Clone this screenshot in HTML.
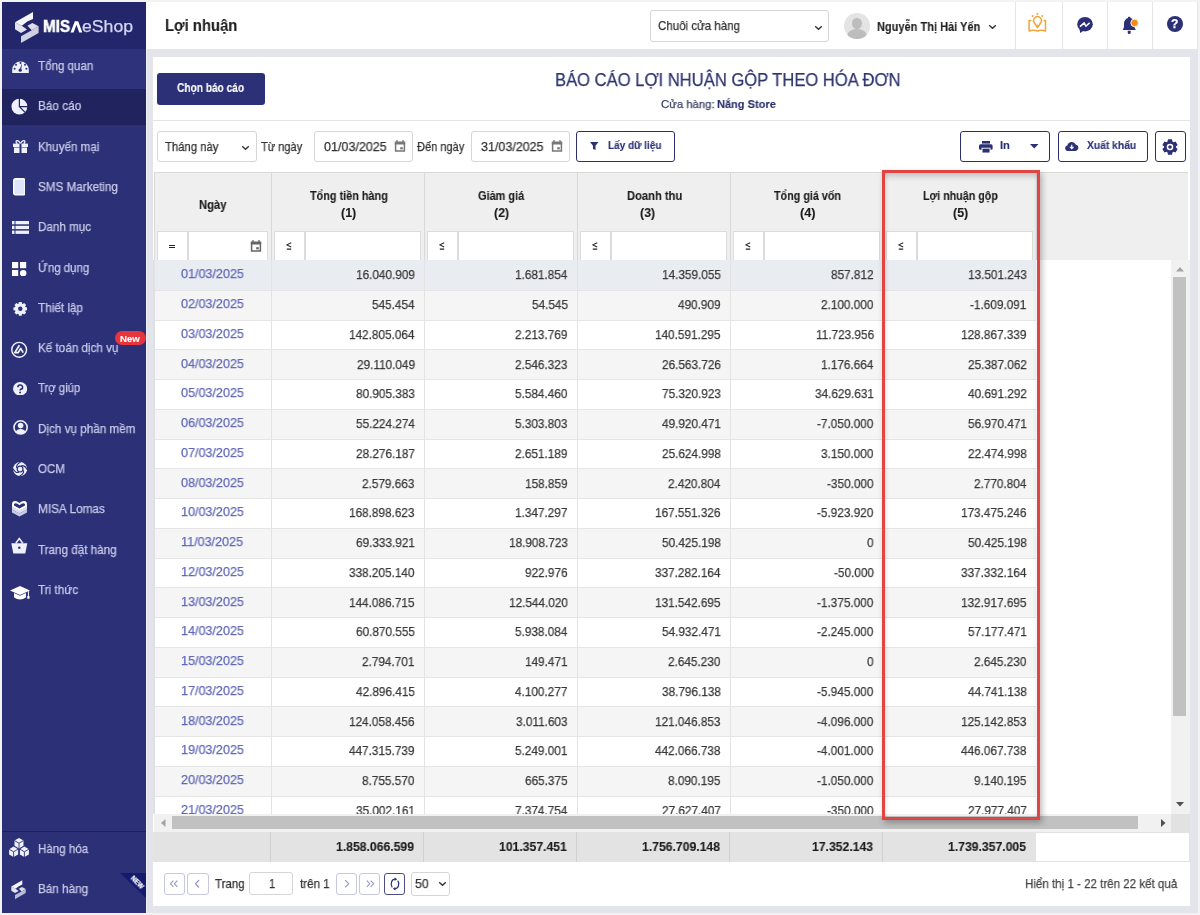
<!DOCTYPE html><html><head><meta charset="utf-8"><style>
*{margin:0;padding:0;box-sizing:border-box}
html,body{width:1200px;height:915px;overflow:hidden}
body{background:#f3f3f5;font-family:"Liberation Sans",sans-serif;position:relative;color:#333}
.a{position:absolute}
.app{left:2px;top:2px;width:1196px;height:911px;background:#e4e5ea}
.sb{left:2px;top:2px;width:144px;height:911px;background:#2c3077}
.logo{left:2px;top:2px;width:144px;height:47px;background:#23266a}
.it{left:2px;width:144px;height:40.25px}
.hdr{left:146px;top:2px;width:1051px;height:47px;background:#fff}
.panel{left:153px;top:57px;width:1037px;height:849px;background:#fff}
.txt{position:absolute;white-space:nowrap;line-height:1;transform-origin:0 0;will-change:transform;-webkit-text-stroke:0.25px currentColor}
.btn{position:absolute;border:1.6px solid #2b2e6c;border-radius:3px;background:#fff}
.inp{position:absolute;border:1px solid #d6d6d6;border-radius:3px;background:#fff}
</style></head><body>
<div class="a app"></div>
<div class="a sb"></div>
<div class="a logo"></div>
<svg class="a" style="left:10px;top:8px" width="34" height="38" viewBox="0 0 34 38">
<polygon points="5,14.3 23,3.9 23,11 17.3,13.6 11.8,17.8" fill="#f6f6fb"/>
<polygon points="5,14.3 11.8,17.8 17,21.6 11,24.9 5,21.2" fill="#e4e4ef"/>
<polygon points="17.4,17.8 22.4,14.9 28.6,18.3 21.8,22.2" fill="#dedeea"/>
<polygon points="11,28.2 21.8,22.2 28.6,18.3 28.6,24.9 11,34.9" fill="#cfd0e0"/>
</svg>
<div class="txt" style="left:43.23px;top:18.00px;font-size:16.23px;font-weight:bold;-webkit-text-stroke:0.12px currentColor;color:#fff;transform:scaleX(0.9407);-webkit-text-stroke:0.5px #fff">MIS</div>
<svg class="a" style="left:69.5px;top:20.5px" width="13" height="12" viewBox="0 0 13 12"><path d="M0.5 11.5L4.8 0.3H8.2L12.3 11.5H9.2L6.5 3.8 3.6 11.5z" fill="#fff"/></svg>
<div class="txt" style="left:82.49px;top:18.00px;font-size:16.23px;color:#d4d6f0;transform:scaleX(1.0874);">eShop</div>
<div class="a it" style="top:49.00px;background:#2e327a;"></div>
<div class="txt" style="left:38.37px;top:60.00px;font-size:12.17px;color:#c8cae9;transform:scaleX(0.9525);">Tổng quan</div>
<div class="a it" style="top:89.30px;background:#21235f;height:36px;"></div>
<div class="txt" style="left:37.65px;top:100.00px;font-size:12.17px;color:#c8cae9;transform:scaleX(0.9718);">Báo cáo</div>
<div class="txt" style="left:37.67px;top:141.00px;font-size:12.17px;color:#c8cae9;transform:scaleX(0.9559);">Khuyến mại</div>
<div class="txt" style="left:38.01px;top:181.00px;font-size:12.17px;color:#c8cae9;transform:scaleX(0.9620);">SMS Marketing</div>
<div class="txt" style="left:37.67px;top:221.00px;font-size:12.17px;color:#c8cae9;transform:scaleX(0.9580);">Danh mục</div>
<div class="txt" style="left:37.68px;top:262.00px;font-size:12.17px;color:#c8cae9;transform:scaleX(0.9450);">Ứng dụng</div>
<div class="txt" style="left:38.36px;top:302.00px;font-size:12.17px;color:#c8cae9;transform:scaleX(0.9652);">Thiết lập</div>
<div class="txt" style="left:37.66px;top:342.00px;font-size:12.17px;color:#c8cae9;transform:scaleX(0.9602);">Kế toán dịch vụ</div>
<div class="txt" style="left:38.37px;top:382.00px;font-size:12.17px;color:#c8cae9;transform:scaleX(0.9333);">Trợ giúp</div>
<div class="txt" style="left:37.66px;top:423.00px;font-size:12.17px;color:#c8cae9;transform:scaleX(0.9608);">Dịch vụ phần mềm</div>
<div class="txt" style="left:38.02px;top:463.00px;font-size:12.17px;color:#c8cae9;transform:scaleX(0.9484);">OCM</div>
<div class="txt" style="left:37.65px;top:503.00px;font-size:12.17px;color:#c8cae9;transform:scaleX(0.9709);">MISA Lomas</div>
<div class="txt" style="left:38.37px;top:544.00px;font-size:12.17px;color:#c8cae9;transform:scaleX(0.9583);">Trang đặt hàng</div>
<div class="txt" style="left:38.36px;top:584.00px;font-size:12.17px;color:#c8cae9;transform:scaleX(0.9657);">Tri thức</div>
<svg class="a" style="left:11.5px;top:59.5px" width="17" height="13" viewBox="0 0 17 13"><path d="M0.2 13V9.8A8.3 8.3 0 0 1 16.8 9.8V13z" fill="#eef0fb"/><g fill="#2c3077"><circle cx="8.5" cy="3" r="1"/><circle cx="4" cy="4.8" r="1"/><circle cx="13" cy="4.8" r="1"/><circle cx="2.6" cy="8.8" r="1"/><circle cx="14.4" cy="8.8" r="1"/><circle cx="8.2" cy="10.2" r="1.6"/><path d="M7.6 10L9.6 4.2 10 4.4 9 10.5z"/></g></svg>
<svg class="a" style="left:11px;top:97.5px" width="17.5" height="17.5" viewBox="0 0 17.5 17.5"><circle cx="8.4" cy="8.6" r="7.9" fill="#eef0fb"/><path d="M8.4 0V8.6H17.5M8.4 8.6L14.6 14.8" stroke="#21235f" stroke-width="1.2" fill="none"/></svg>
<svg class="a" style="left:12.5px;top:140px" width="15" height="13" viewBox="0 0 15 13"><path d="M4.5 3.5C2.5 3 2.8 0.3 4.6 0.6 6 0.9 7.5 3.5 7.5 3.5 7.5 3.5 9 0.9 10.4 0.6 12.2 0.3 12.5 3 10.5 3.5" stroke="#eef0fb" stroke-width="1.3" fill="none"/><rect x="0" y="3.6" width="15" height="3.4" fill="#eef0fb"/><rect x="1" y="7.5" width="13" height="5.5" fill="#eef0fb"/><rect x="6.5" y="3.6" width="2" height="9.4" fill="#2c3077"/></svg>
<svg class="a" style="left:12.7px;top:178.3px" width="12.6" height="17.6" viewBox="0 0 12.6 17.6"><rect x="0.7" y="0.7" width="11.2" height="16.2" rx="1.8" fill="#dfe6fb" stroke="#fff" stroke-width="1.4"/></svg>
<svg class="a" style="left:11.7px;top:220.9px" width="17.2" height="13" viewBox="0 0 17.2 13" fill="#eef0fb"><rect x="0" y="0" width="2.5" height="3.3"/><rect x="3.5" y="0" width="13.7" height="3.3"/><rect x="0" y="4.8" width="2.5" height="3.3"/><rect x="3.5" y="4.8" width="13.7" height="3.3"/><rect x="0" y="9.6" width="2.5" height="3.3"/><rect x="3.5" y="9.6" width="13.7" height="3.3"/></svg>
<svg class="a" style="left:12px;top:261.7px" width="14.5" height="14.5" viewBox="0 0 14.5 14.5" fill="#fff"><rect x="0" y="0" width="6.2" height="6.2"/><rect x="8" y="0" width="6.2" height="6.2"/><rect x="0" y="8" width="6.2" height="6.2"/><circle cx="11.2" cy="11.2" r="3.2"/></svg>
<svg class="a" style="left:12.7px;top:302.3px" width="14.6" height="13.6" viewBox="-7.3 -6.8 14.6 13.6"><path fill="#eef0fb" d="M5.11 -1.75 L6.86 -1.39 L6.86 1.39 L5.11 1.75 L4.85 2.38 L5.83 3.87 L3.87 5.83 L2.38 4.85 L1.75 5.11 L1.39 6.86 L-1.39 6.86 L-1.75 5.11 L-2.38 4.85 L-3.87 5.83 L-5.83 3.87 L-4.85 2.38 L-5.11 1.75 L-6.86 1.39 L-6.86 -1.39 L-5.11 -1.75 L-4.85 -2.38 L-5.83 -3.87 L-3.87 -5.83 L-2.38 -4.85 L-1.75 -5.11 L-1.39 -6.86 L1.39 -6.86 L1.75 -5.11 L2.38 -4.85 L3.87 -5.83 L5.83 -3.87 L4.85 -2.38Z"/><circle r="2.2" fill="#2c3077"/></svg>
<svg class="a" style="left:8px;top:338px" width="24" height="24" viewBox="0 0 24 24"><circle cx="11.15" cy="11.8" r="7.4" fill="none" stroke="#f4f4ff" stroke-width="1.4"/><path d="M11.4 7.2L6.8 14.6H10.2L12.7 10.4L15.2 14.6" stroke="#f4f4ff" stroke-width="1.7" fill="none" stroke-linejoin="round"/></svg>
<svg class="a" style="left:12.8px;top:381.8px" width="14.2" height="13.6" viewBox="0 0 14.2 13.6"><ellipse cx="7.1" cy="6.8" rx="7.1" ry="6.8" fill="#eef0fb"/><path d="M4.8 5.2A2.4 2.2 0 1 1 7.8 7.3Q7.1 7.6 7.1 8.4" stroke="#2c3077" stroke-width="1.6" fill="none"/><circle cx="7.1" cy="10.4" r="1" fill="#2c3077"/></svg>
<svg class="a" style="left:13px;top:420px" width="15.2" height="14.8" viewBox="0 0 15.2 14.8"><circle cx="7.6" cy="7.4" r="6.6" fill="none" stroke="#eef0fb" stroke-width="1.6"/><circle cx="7.6" cy="5.6" r="2.8" fill="#eef0fb"/><path d="M2.8 11.8Q4 9 7.6 9 11.2 9 12.4 11.8 10.6 14 7.6 14 4.6 14 2.8 11.8z" fill="#eef0fb"/></svg>
<svg class="a" style="left:12.6px;top:461.8px" width="14.2" height="14.2" viewBox="-7.1 -7.1 14.2 14.2"><circle r="7" fill="#eef0fb"/><g stroke="#2c3077" stroke-width="1.1" fill="none"><path d="M-3.4 -1.2 Q-4 -5 0.5 -6.9"/><path d="M3.4 1.2 Q4 5 -0.5 6.9"/><path d="M1.2 -3.4 Q5 -4 6.9 0.5"/><path d="M-1.2 3.4 Q-5 4 -6.9 -0.5"/></g><circle r="3.5" fill="#2c3077"/><circle r="2.3" fill="#eef0fb"/></svg>
<svg class="a" style="left:10.6px;top:500px" width="17" height="17" viewBox="0 0 17 17"><path d="M1 9.5V12.5L8.5 16.5 16 12.5V9.5L8.5 13.5z" fill="#c9cbea"/><path d="M1 6.5V9.5L8.5 13.5 16 9.5V6.5L8.5 10.5z" fill="#dcdef5"/><path d="M8.5 3Q5.5 0.3 2.5 1.3 0.8 2 1 4.5V6.8L8.5 10.8 16 6.8V4.5Q16.2 2 14.5 1.3 11.5 0.3 8.5 3z" fill="#fff"/><path d="M8.5 5.2Q6 3 3.8 3.4 2.9 3.7 3 4.8V5.6L8.5 8.6 14 5.6V4.8Q14.1 3.7 13.2 3.4 11 3 8.5 5.2z" fill="#2c3077"/></svg>
<svg class="a" style="left:11px;top:534.4px" width="16.6" height="20.3" viewBox="0 0 16.6 20.3"><path d="M4.8 9.2L8.3 4.6 11.8 9.2" stroke="#eef0fb" stroke-width="1.5" fill="none"/><path d="M0.3 9.3H16.3L14.3 19.6H2.3z" fill="#eef0fb"/><circle cx="8.3" cy="13.8" r="1.2" fill="#2c3077"/></svg>
<svg class="a" style="left:9.5px;top:585.5px" width="20.3" height="14.5" viewBox="0 0 20.3 14.5"><path d="M10 0L20 4.5 10 9 0 4.5z" fill="#fff"/><path d="M4 7V11.5Q10 15.5 16 11.5V7L10 9.8z" fill="#fff"/><path d="M18.4 5.2V10" stroke="#fff" stroke-width="1"/><rect x="17.3" y="10" width="2.2" height="2.8" fill="#fff"/></svg>
<svg class="a" style="left:8px;top:838px" width="22" height="20" viewBox="0 0 22 20"><polygon points="11.00,0.00 6.50,2.60 6.50,7.80 11.00,10.40 15.50,7.80 15.50,2.60" fill="#eef0fb"/><path d="M6.50 2.60L11 5.2L15.50 2.60M11 5.2V10.40" stroke="#2c3077" stroke-width="0.9" fill="none"/><polygon points="5.60,8.60 1.10,11.20 1.10,16.40 5.60,19.00 10.10,16.40 10.10,11.20" fill="#eef0fb"/><path d="M1.10 11.20L5.6 13.8L10.10 11.20M5.6 13.8V19.00" stroke="#2c3077" stroke-width="0.9" fill="none"/><polygon points="16.40,8.60 11.90,11.20 11.90,16.40 16.40,19.00 20.90,16.40 20.90,11.20" fill="#eef0fb"/><path d="M11.90 11.20L16.4 13.8L20.90 11.20M16.4 13.8V19.00" stroke="#2c3077" stroke-width="0.9" fill="none"/></svg>
<svg class="a" style="left:11.2px;top:879.8px" width="15" height="19.5" viewBox="4.5 3.5 24.5 32"><polygon points="5,14.3 23,3.9 23,11 17.3,13.6 11.8,17.8" fill="#f6f6fb"/><polygon points="5,14.3 11.8,17.8 17,21.6 11,24.9 5,21.2" fill="#e4e4ef"/><polygon points="17.4,17.8 22.4,14.9 28.6,18.3 21.8,22.2" fill="#dedeea"/><polygon points="11,28.2 21.8,22.2 28.6,18.3 28.6,24.9 11,34.9" fill="#b9bcd8"/></svg>
<div class="a" style="left:115px;top:331px;width:30.5px;height:14px;border-radius:7px;background:#e8343b"></div>
<div class="txt" style="left:120.12px;top:335.00px;font-size:8.70px;font-weight:bold;-webkit-text-stroke:0.12px currentColor;color:#fff;transform:scaleX(1.1095);">New</div>
<div class="a" style="left:2px;top:830.5px;width:144px;height:1.5px;background:#1c1f63"></div>
<div class="txt" style="left:37.77px;top:843.00px;font-size:12.17px;color:#c8cae9;transform:scaleX(0.9506);">Hàng hóa</div>
<div class="txt" style="left:37.76px;top:883.00px;font-size:12.17px;color:#c8cae9;transform:scaleX(0.9643);">Bán hàng</div>
<svg class="a" style="left:120px;top:873px" width="26" height="25"><polygon points="0,0 26,0 26,25" fill="#151a6e"/></svg>
<div class="txt" style="left:133.5px;top:875px;font-size:6.5px;font-weight:bold;color:#fff;transform:rotate(45deg);transform-origin:0 0">NEW</div>
<div class="a hdr"></div>
<div class="txt" style="left:164.56px;top:17.00px;font-size:17.39px;font-weight:bold;-webkit-text-stroke:0.12px currentColor;color:#1e1e1e;transform:scaleX(0.8540);">Lợi nhuận</div>
<div class="inp" style="left:650px;top:10px;width:179px;height:31.5px"></div>
<div class="txt" style="left:658.12px;top:20.00px;font-size:12.90px;color:#333;transform:scaleX(0.8938);">Chuôi cửa hàng</div>
<svg class="a" style="left:813.5px;top:24.5px" width="9" height="6" viewBox="0 0 9 6"><path d="M1.2 1.2 L4.5 4.3 L7.8 1.2" stroke="#333" stroke-width="1.4" fill="none"/></svg>
<div class="a" style="left:844px;top:13px;width:25.5px;height:25.5px;border-radius:50%;background:#e4e4e4;overflow:hidden"><div class="a" style="left:8px;top:5px;width:9.5px;height:10.5px;border-radius:50%;background:#bdbdbd"></div><div class="a" style="left:3px;top:15.5px;width:19.5px;height:14px;border-radius:50% 50% 0 0;background:#bdbdbd"></div></div>
<div class="txt" style="left:876.73px;top:21.00px;font-size:12.61px;font-weight:bold;-webkit-text-stroke:0.12px currentColor;color:#222;transform:scaleX(0.8738);">Nguyễn Thị Hải Yến</div>
<svg class="a" style="left:988px;top:23.5px" width="9" height="6" viewBox="0 0 9 6"><path d="M1.2 1.2 L4.5 4.3 L7.8 1.2" stroke="#333" stroke-width="1.4" fill="none"/></svg>
<div class="a" style="left:1015px;top:2px;width:1px;height:47px;background:#e6e6e6"></div>
<div class="a" style="left:1062px;top:2px;width:1px;height:47px;background:#e6e6e6"></div>
<div class="a" style="left:1107px;top:2px;width:1px;height:47px;background:#e6e6e6"></div>
<div class="a" style="left:1152px;top:2px;width:1px;height:47px;background:#e6e6e6"></div>
<svg class="a" style="left:1022px;top:8px" width="30" height="30" viewBox="0 0 30 30"><g fill="none" stroke="#f0a53a" stroke-width="1.5" stroke-linejoin="round"><path d="M15.5 19.6 L12.4 15 A3.9 3.9 0 1 1 18.6 15 Z"/><path d="M9.4 12.6 H7.1 V23 Q11.2 21.6 15.3 23 Q19.4 21.6 23.5 23 V12.6 H21.6"/></g><g fill="#f0a53a"><circle cx="15.3" cy="5.9" r="1"/><circle cx="10.6" cy="8" r="1"/><circle cx="20.2" cy="8" r="1"/><circle cx="15.4" cy="17.2" r="0.8"/></g></svg>
<svg class="a" style="left:1070px;top:10px" width="30" height="30" viewBox="0 0 30 30"><ellipse cx="15" cy="14.2" rx="7.8" ry="7.3" fill="#2c3077"/><path d="M9.5 19 L10.2 22.9 L14 20.5z" fill="#2c3077"/><path d="M10 16.6 L14.2 12.9 L15.8 16.3 L19.6 12.9" stroke="#fff" stroke-width="1.5" fill="none" stroke-linejoin="round"/></svg>
<svg class="a" style="left:1115px;top:10px" width="30" height="30" viewBox="0 0 30 30"><path d="M14.2 6.8c-0.8 0-1.3 0.5-1.3 1.1c-2.5 0.8-3.9 3.1-3.9 5.6V17L7.8 19.9H20.8L19.4 17V13.5c0-2.5-1.4-4.8-3.9-5.6c0-0.6-0.5-1.1-1.3-1.1z" fill="#2c3077"/><path d="M12.7 20.8h3v1.6a1.5 1.5 0 0 1-3 0z" fill="#2c3077"/><circle cx="19.6" cy="12.9" r="3.8" fill="#f08c1c" stroke="#fff" stroke-width="0.9"/></svg>
<div class="a" style="left:1167px;top:16px;width:16px;height:16px;border-radius:50%;background:#2c3077"></div>
<div class="txt" style="left:1171.3px;top:18.3px;font-size:12px;font-weight:bold;color:#fff">?</div>
<div class="a panel"></div>
<div class="a" style="left:157px;top:73px;width:108px;height:32px;border-radius:3px;background:#2c3077"></div>
<div class="txt" style="left:177.39px;top:82.00px;font-size:12.32px;font-weight:bold;-webkit-text-stroke:0.12px currentColor;color:#fff;transform:scaleX(0.8230);">Chọn báo cáo</div>
<div class="txt" style="left:554.77px;top:71.00px;font-size:18.26px;color:#2f3470;transform:scaleX(0.9084);">BÁO CÁO LỢI NHUẬN GỘP THEO HÓA ĐƠN</div>
<div class="txt" style="left:661.43px;top:99.00px;font-size:11.45px;color:#3d4068;transform:scaleX(0.9895);">Cửa hàng:</div>
<div class="txt" style="left:716.83px;top:99.00px;font-size:11.45px;font-weight:bold;-webkit-text-stroke:0.12px currentColor;color:#2a2e6a;transform:scaleX(0.9636);">Nắng Store</div>
<div class="a" style="left:153px;top:120px;width:1037px;height:1px;background:#e4e4e4"></div>
<div class="inp" style="left:157px;top:131px;width:99.5px;height:31px"></div>
<div class="txt" style="left:165.37px;top:141.00px;font-size:12.68px;color:#333;transform:scaleX(0.8918);">Tháng này</div>
<svg class="a" style="left:241px;top:144.5px" width="9" height="6" viewBox="0 0 9 6"><path d="M1.2 1.2 L4.5 4.3 L7.8 1.2" stroke="#333" stroke-width="1.4" fill="none"/></svg>
<div class="txt" style="left:260.78px;top:141.00px;font-size:12.68px;color:#333;transform:scaleX(0.8717);">Từ ngày</div>
<div class="inp" style="left:314px;top:131px;width:99px;height:31px"></div>
<div class="txt" style="left:324.25px;top:141.00px;font-size:12.68px;color:#333;transform:scaleX(0.9897);">01/03/2025</div>
<svg class="a" style="left:394.2px;top:140.3px" width="12" height="12" viewBox="0 0 12 12"><path d="M1.6 3h8.8v8H1.6z" fill="none" stroke="#777" stroke-width="1.5"/><path d="M0.8 1.5h10.4v3H0.8z" fill="#777"/><path d="M3 0v2M9 0v2" stroke="#777" stroke-width="1.3"/><rect x="6.2" y="7.2" width="2.6" height="2.2" fill="#777"/></svg>
<div class="txt" style="left:417.39px;top:141.00px;font-size:12.68px;color:#333;transform:scaleX(0.8717);">Đến ngày</div>
<div class="inp" style="left:471px;top:131px;width:99px;height:31px"></div>
<div class="txt" style="left:481.10px;top:141.00px;font-size:12.68px;color:#333;transform:scaleX(0.9873);">31/03/2025</div>
<svg class="a" style="left:550.8px;top:140.3px" width="12" height="12" viewBox="0 0 12 12"><path d="M1.6 3h8.8v8H1.6z" fill="none" stroke="#777" stroke-width="1.5"/><path d="M0.8 1.5h10.4v3H0.8z" fill="#777"/><path d="M3 0v2M9 0v2" stroke="#777" stroke-width="1.3"/><rect x="6.2" y="7.2" width="2.6" height="2.2" fill="#777"/></svg>
<div class="btn" style="left:576px;top:131px;width:99px;height:31px"></div>
<svg class="a" style="left:590px;top:141.8px" width="9" height="8" viewBox="0 0 9 8"><path d="M0 0h8.5L5.5 3.8V8L3 7V3.8z" fill="#2c3077"/></svg>
<div class="txt" style="left:607.60px;top:140.00px;font-size:10.72px;font-weight:bold;-webkit-text-stroke:0.12px currentColor;color:#2c3077;transform:scaleX(0.9342);">Lấy dữ liệu</div>
<div class="btn" style="left:959.5px;top:131px;width:90.5px;height:30.8px"></div>
<svg class="a" style="left:979px;top:140.5px" width="14" height="12" viewBox="0 0 14 12"><rect x="3" y="0" width="8" height="2.6" fill="#2c3077"/><rect x="0" y="3.2" width="13.6" height="5.6" rx="1.6" fill="#2c3077"/><rect x="3" y="7.2" width="8" height="4.8" fill="#2c3077" stroke="#fff" stroke-width="0.9"/></svg>
<div class="txt" style="left:999.82px;top:140.00px;font-size:10.58px;font-weight:bold;-webkit-text-stroke:0.12px currentColor;color:#2c3077;transform:scaleX(1.0571);">In</div>
<svg class="a" style="left:1030px;top:144px" width="8.5" height="4.5"><path d="M0 0h8.5L4.25 4.5z" fill="#2c3077"/></svg>
<div class="btn" style="left:1057.5px;top:131px;width:90px;height:30.8px"></div>
<svg class="a" style="left:1065px;top:141.5px" width="13.5" height="9" viewBox="0 0 14 9.5"><path d="M3.3 9.5C1.4 9.5 0 8.2 0 6.5 0 5 1 3.9 2.4 3.6 2.8 1.5 4.6 0 6.9 0c1.9 0 3.5 1.1 4.2 2.7C12.8 3 14 4.3 14 6c0 2-1.6 3.5-3.6 3.5z" fill="#2c3077"/><path d="M7 3v3.8M5.1 5.2l1.9 1.9 1.9-1.9" stroke="#fff" stroke-width="1.3" fill="none"/></svg>
<div class="txt" style="left:1086.60px;top:140.00px;font-size:10.58px;font-weight:bold;-webkit-text-stroke:0.12px currentColor;color:#2c3077;transform:scaleX(0.9734);">Xuất khẩu</div>
<div class="btn" style="left:1155.2px;top:131px;width:30.5px;height:30.8px"></div>
<svg class="a" style="left:1161.8px;top:139px" width="16" height="16" viewBox="-8 -8 16 16"><path fill="#2c3077" d="M5.97 0.62 L7.63 2.06 L5.60 5.58 L3.52 4.86 L2.45 5.48 L2.03 7.63 L-2.03 7.63 L-2.45 5.48 L-3.52 4.86 L-5.60 5.58 L-7.63 2.06 L-5.97 0.62 L-5.97 -0.62 L-7.63 -2.06 L-5.60 -5.58 L-3.52 -4.86 L-2.45 -5.48 L-2.03 -7.63 L2.03 -7.63 L2.45 -5.48 L3.52 -4.86 L5.60 -5.58 L7.63 -2.06 L5.97 -0.62Z"/><circle r="3.3" fill="#fff"/><circle r="1.8" fill="#2c3077"/></svg>
<div class="a" style="left:154px;top:172px;width:1034px;height:88px;background:#efefef;border-top:1px solid #dadada"></div>
<div class="a" style="left:154px;top:172px;width:1px;height:88px;background:#dadada"></div>
<div class="a" style="left:271px;top:172px;width:1px;height:88px;background:#d8d8d8"></div>
<div class="a" style="left:424px;top:172px;width:1px;height:88px;background:#d8d8d8"></div>
<div class="a" style="left:577px;top:172px;width:1px;height:88px;background:#d8d8d8"></div>
<div class="a" style="left:730px;top:172px;width:1px;height:88px;background:#d8d8d8"></div>
<div class="a" style="left:883px;top:172px;width:1px;height:88px;background:#d8d8d8"></div>
<div class="a" style="left:1036px;top:172px;width:1px;height:88px;background:#d8d8d8"></div>
<div class="txt" style="left:199.21px;top:199.00px;font-size:12.46px;font-weight:bold;-webkit-text-stroke:0.12px currentColor;color:#1c1c1c;transform:scaleX(0.9039);">Ngày</div>
<div class="a" style="left:157px;top:231px;width:30.5px;height:29px;background:#fff;border:1px solid #dcdcdc;border-bottom:none"></div>
<div class="a" style="left:187.5px;top:231px;width:80.5px;height:29px;background:#fff;border:1px solid #dcdcdc;border-bottom:none"></div>
<div class="a" style="left:168.5px;top:244.5px;width:6px;height:1.3px;background:#222"></div><div class="a" style="left:168.5px;top:247px;width:6px;height:1.3px;background:#222"></div>
<div class="txt" style="left:309.89px;top:190.00px;font-size:12.46px;font-weight:bold;-webkit-text-stroke:0.12px currentColor;color:#1c1c1c;transform:scaleX(0.8714);">Tổng tiền hàng</div>
<div class="txt" style="left:340.88px;top:207.00px;font-size:12.46px;font-weight:bold;-webkit-text-stroke:0.12px currentColor;color:#1c1c1c;transform:scaleX(1.0029);">(1)</div>
<div class="a" style="left:274px;top:231px;width:30.5px;height:29px;background:#fff;border:1px solid #dcdcdc;border-bottom:none"></div>
<div class="a" style="left:304.5px;top:231px;width:116.5px;height:29px;background:#fff;border:1px solid #dcdcdc;border-bottom:none"></div>
<svg class="a" style="left:286px;top:241.5px" width="6" height="8" viewBox="0 0 6 8"><path d="M5.2 0.8L0.8 2.9 5.2 5M0.8 7.1h4.4" stroke="#222" stroke-width="1.05" fill="none"/></svg>
<div class="txt" style="left:478.06px;top:190.00px;font-size:12.46px;font-weight:bold;-webkit-text-stroke:0.12px currentColor;color:#1c1c1c;transform:scaleX(0.8770);">Giảm giá</div>
<div class="txt" style="left:493.78px;top:207.00px;font-size:12.46px;font-weight:bold;-webkit-text-stroke:0.12px currentColor;color:#1c1c1c;transform:scaleX(0.9886);">(2)</div>
<div class="a" style="left:427px;top:231px;width:30.5px;height:29px;background:#fff;border:1px solid #dcdcdc;border-bottom:none"></div>
<div class="a" style="left:457.5px;top:231px;width:116.5px;height:29px;background:#fff;border:1px solid #dcdcdc;border-bottom:none"></div>
<svg class="a" style="left:439px;top:241.5px" width="6" height="8" viewBox="0 0 6 8"><path d="M5.2 0.8L0.8 2.9 5.2 5M0.8 7.1h4.4" stroke="#222" stroke-width="1.05" fill="none"/></svg>
<div class="txt" style="left:626.62px;top:190.00px;font-size:12.46px;font-weight:bold;-webkit-text-stroke:0.12px currentColor;color:#1c1c1c;transform:scaleX(0.8974);">Doanh thu</div>
<div class="txt" style="left:639.98px;top:207.00px;font-size:12.46px;font-weight:bold;-webkit-text-stroke:0.12px currentColor;color:#1c1c1c;transform:scaleX(0.9886);">(3)</div>
<div class="a" style="left:580px;top:231px;width:30.5px;height:29px;background:#fff;border:1px solid #dcdcdc;border-bottom:none"></div>
<div class="a" style="left:610.5px;top:231px;width:116.5px;height:29px;background:#fff;border:1px solid #dcdcdc;border-bottom:none"></div>
<svg class="a" style="left:592px;top:241.5px" width="6" height="8" viewBox="0 0 6 8"><path d="M5.2 0.8L0.8 2.9 5.2 5M0.8 7.1h4.4" stroke="#222" stroke-width="1.05" fill="none"/></svg>
<div class="txt" style="left:774.19px;top:190.00px;font-size:12.46px;font-weight:bold;-webkit-text-stroke:0.12px currentColor;color:#1c1c1c;transform:scaleX(0.8649);">Tổng giá vốn</div>
<div class="txt" style="left:799.66px;top:207.00px;font-size:12.46px;font-weight:bold;-webkit-text-stroke:0.12px currentColor;color:#1c1c1c;transform:scaleX(1.0244);">(4)</div>
<div class="a" style="left:733px;top:231px;width:30.5px;height:29px;background:#fff;border:1px solid #dcdcdc;border-bottom:none"></div>
<div class="a" style="left:763.5px;top:231px;width:116.5px;height:29px;background:#fff;border:1px solid #dcdcdc;border-bottom:none"></div>
<svg class="a" style="left:745px;top:241.5px" width="6" height="8" viewBox="0 0 6 8"><path d="M5.2 0.8L0.8 2.9 5.2 5M0.8 7.1h4.4" stroke="#222" stroke-width="1.05" fill="none"/></svg>
<div class="txt" style="left:922.55px;top:190.00px;font-size:12.46px;font-weight:bold;-webkit-text-stroke:0.12px currentColor;color:#1c1c1c;transform:scaleX(0.8595);">Lợi nhuận gộp</div>
<div class="txt" style="left:952.67px;top:207.00px;font-size:12.46px;font-weight:bold;-webkit-text-stroke:0.12px currentColor;color:#1c1c1c;transform:scaleX(1.0029);">(5)</div>
<div class="a" style="left:886px;top:231px;width:30.5px;height:29px;background:#fff;border:1px solid #dcdcdc;border-bottom:none"></div>
<div class="a" style="left:916.5px;top:231px;width:116.5px;height:29px;background:#fff;border:1px solid #dcdcdc;border-bottom:none"></div>
<svg class="a" style="left:898px;top:241.5px" width="6" height="8" viewBox="0 0 6 8"><path d="M5.2 0.8L0.8 2.9 5.2 5M0.8 7.1h4.4" stroke="#222" stroke-width="1.05" fill="none"/></svg>
<svg class="a" style="left:250.3px;top:239.5px" width="12" height="12" viewBox="0 0 12 12"><path d="M1.6 3h8.8v8H1.6z" fill="none" stroke="#666" stroke-width="1.5"/><path d="M0.8 1.5h10.4v3H0.8z" fill="#666"/><path d="M3 0v2M9 0v2" stroke="#666" stroke-width="1.3"/><rect x="6.2" y="7.2" width="2.6" height="2.2" fill="#666"/></svg>
<div class="a" style="left:154px;top:260.00px;width:882px;height:31.00px;background:#e9ecf1;border-bottom:1px solid #e5e5e5"></div>
<div class="txt" style="left:181.30px;top:268.00px;font-size:12.90px;color:#6168b8;transform:scaleX(0.9753);">01/03/2025</div>
<div class="txt" style="left:355.76px;top:269.00px;font-size:12.90px;color:#383838;transform:scaleX(0.9134);">16.040.909</div>
<div class="txt" style="left:515.12px;top:269.00px;font-size:12.90px;color:#383838;transform:scaleX(0.9134);">1.681.854</div>
<div class="txt" style="left:661.76px;top:269.00px;font-size:12.90px;color:#383838;transform:scaleX(0.9134);">14.359.055</div>
<div class="txt" style="left:831.25px;top:269.00px;font-size:12.90px;color:#383838;transform:scaleX(0.9134);">857.812</div>
<div class="txt" style="left:967.76px;top:269.00px;font-size:12.90px;color:#383838;transform:scaleX(0.9134);">13.501.243</div>
<div class="a" style="left:154px;top:291.00px;width:882px;height:30.00px;background:#f5f5f5;border-bottom:1px solid #e5e5e5"></div>
<div class="txt" style="left:181.30px;top:298.00px;font-size:12.90px;color:#6168b8;transform:scaleX(0.9753);">02/03/2025</div>
<div class="txt" style="left:372.02px;top:299.00px;font-size:12.90px;color:#383838;transform:scaleX(0.9134);">545.454</div>
<div class="txt" style="left:531.62px;top:299.00px;font-size:12.90px;color:#383838;transform:scaleX(0.9134);">54.545</div>
<div class="txt" style="left:678.14px;top:299.00px;font-size:12.90px;color:#383838;transform:scaleX(0.9134);">490.909</div>
<div class="txt" style="left:821.24px;top:299.00px;font-size:12.90px;color:#383838;transform:scaleX(0.9134);">2.100.000</div>
<div class="txt" style="left:970.47px;top:299.00px;font-size:12.90px;color:#383838;transform:scaleX(0.9134);">-1.609.091</div>
<div class="a" style="left:154px;top:321.00px;width:882px;height:29.00px;background:#ffffff;border-bottom:1px solid #e5e5e5"></div>
<div class="txt" style="left:181.30px;top:328.00px;font-size:12.90px;color:#6168b8;transform:scaleX(0.9753);">03/03/2025</div>
<div class="txt" style="left:349.04px;top:329.00px;font-size:12.90px;color:#383838;transform:scaleX(0.9134);">142.805.064</div>
<div class="txt" style="left:515.36px;top:329.00px;font-size:12.90px;color:#383838;transform:scaleX(0.9134);">2.213.769</div>
<div class="txt" style="left:655.16px;top:329.00px;font-size:12.90px;color:#383838;transform:scaleX(0.9134);">140.591.295</div>
<div class="txt" style="left:815.58px;top:329.00px;font-size:12.90px;color:#383838;transform:scaleX(0.9134);">11.723.956</div>
<div class="txt" style="left:961.28px;top:329.00px;font-size:12.90px;color:#383838;transform:scaleX(0.9134);">128.867.339</div>
<div class="a" style="left:154px;top:350.00px;width:882px;height:30.00px;background:#f5f5f5;border-bottom:1px solid #e5e5e5"></div>
<div class="txt" style="left:181.30px;top:358.00px;font-size:12.90px;color:#6168b8;transform:scaleX(0.9753);">04/03/2025</div>
<div class="txt" style="left:356.70px;top:359.00px;font-size:12.90px;color:#383838;transform:scaleX(0.9134);">29.110.049</div>
<div class="txt" style="left:515.36px;top:359.00px;font-size:12.90px;color:#383838;transform:scaleX(0.9134);">2.546.323</div>
<div class="txt" style="left:661.76px;top:359.00px;font-size:12.90px;color:#383838;transform:scaleX(0.9134);">26.563.726</div>
<div class="txt" style="left:821.12px;top:359.00px;font-size:12.90px;color:#383838;transform:scaleX(0.9134);">1.176.664</div>
<div class="txt" style="left:967.88px;top:359.00px;font-size:12.90px;color:#383838;transform:scaleX(0.9134);">25.387.062</div>
<div class="a" style="left:154px;top:380.00px;width:882px;height:30.00px;background:#ffffff;border-bottom:1px solid #e5e5e5"></div>
<div class="txt" style="left:181.30px;top:387.00px;font-size:12.90px;color:#6168b8;transform:scaleX(0.9753);">05/03/2025</div>
<div class="txt" style="left:355.76px;top:388.00px;font-size:12.90px;color:#383838;transform:scaleX(0.9134);">80.905.383</div>
<div class="txt" style="left:515.24px;top:388.00px;font-size:12.90px;color:#383838;transform:scaleX(0.9134);">5.584.460</div>
<div class="txt" style="left:661.76px;top:388.00px;font-size:12.90px;color:#383838;transform:scaleX(0.9134);">75.320.923</div>
<div class="txt" style="left:814.88px;top:388.00px;font-size:12.90px;color:#383838;transform:scaleX(0.9134);">34.629.631</div>
<div class="txt" style="left:967.88px;top:388.00px;font-size:12.90px;color:#383838;transform:scaleX(0.9134);">40.691.292</div>
<div class="a" style="left:154px;top:410.00px;width:882px;height:30.00px;background:#f5f5f5;border-bottom:1px solid #e5e5e5"></div>
<div class="txt" style="left:181.30px;top:417.00px;font-size:12.90px;color:#6168b8;transform:scaleX(0.9753);">06/03/2025</div>
<div class="txt" style="left:355.64px;top:418.00px;font-size:12.90px;color:#383838;transform:scaleX(0.9134);">55.224.274</div>
<div class="txt" style="left:515.36px;top:418.00px;font-size:12.90px;color:#383838;transform:scaleX(0.9134);">5.303.803</div>
<div class="txt" style="left:661.88px;top:418.00px;font-size:12.90px;color:#383838;transform:scaleX(0.9134);">49.920.471</div>
<div class="txt" style="left:817.35px;top:418.00px;font-size:12.90px;color:#383838;transform:scaleX(0.9134);">-7.050.000</div>
<div class="txt" style="left:967.88px;top:418.00px;font-size:12.90px;color:#383838;transform:scaleX(0.9134);">56.970.471</div>
<div class="a" style="left:154px;top:440.00px;width:882px;height:29.00px;background:#ffffff;border-bottom:1px solid #e5e5e5"></div>
<div class="txt" style="left:181.30px;top:447.00px;font-size:12.90px;color:#6168b8;transform:scaleX(0.9753);">07/03/2025</div>
<div class="txt" style="left:355.88px;top:448.00px;font-size:12.90px;color:#383838;transform:scaleX(0.9134);">28.276.187</div>
<div class="txt" style="left:515.36px;top:448.00px;font-size:12.90px;color:#383838;transform:scaleX(0.9134);">2.651.189</div>
<div class="txt" style="left:661.76px;top:448.00px;font-size:12.90px;color:#383838;transform:scaleX(0.9134);">25.624.998</div>
<div class="txt" style="left:821.24px;top:448.00px;font-size:12.90px;color:#383838;transform:scaleX(0.9134);">3.150.000</div>
<div class="txt" style="left:967.76px;top:448.00px;font-size:12.90px;color:#383838;transform:scaleX(0.9134);">22.474.998</div>
<div class="a" style="left:154px;top:469.00px;width:882px;height:30.00px;background:#f5f5f5;border-bottom:1px solid #e5e5e5"></div>
<div class="txt" style="left:181.30px;top:477.00px;font-size:12.90px;color:#6168b8;transform:scaleX(0.9753);">08/03/2025</div>
<div class="txt" style="left:362.36px;top:478.00px;font-size:12.90px;color:#383838;transform:scaleX(0.9134);">2.579.663</div>
<div class="txt" style="left:525.14px;top:478.00px;font-size:12.90px;color:#383838;transform:scaleX(0.9134);">158.859</div>
<div class="txt" style="left:668.12px;top:478.00px;font-size:12.90px;color:#383838;transform:scaleX(0.9134);">2.420.804</div>
<div class="txt" style="left:827.13px;top:478.00px;font-size:12.90px;color:#383838;transform:scaleX(0.9134);">-350.000</div>
<div class="txt" style="left:974.12px;top:478.00px;font-size:12.90px;color:#383838;transform:scaleX(0.9134);">2.770.804</div>
<div class="a" style="left:154px;top:499.00px;width:882px;height:30.00px;background:#ffffff;border-bottom:1px solid #e5e5e5"></div>
<div class="txt" style="left:181.05px;top:506.00px;font-size:12.90px;color:#6168b8;transform:scaleX(0.9753);">10/03/2025</div>
<div class="txt" style="left:349.16px;top:507.00px;font-size:12.90px;color:#383838;transform:scaleX(0.9134);">168.898.623</div>
<div class="txt" style="left:515.36px;top:507.00px;font-size:12.90px;color:#383838;transform:scaleX(0.9134);">1.347.297</div>
<div class="txt" style="left:655.16px;top:507.00px;font-size:12.90px;color:#383838;transform:scaleX(0.9134);">167.551.326</div>
<div class="txt" style="left:817.35px;top:507.00px;font-size:12.90px;color:#383838;transform:scaleX(0.9134);">-5.923.920</div>
<div class="txt" style="left:961.16px;top:507.00px;font-size:12.90px;color:#383838;transform:scaleX(0.9134);">173.475.246</div>
<div class="a" style="left:154px;top:529.00px;width:882px;height:30.00px;background:#f5f5f5;border-bottom:1px solid #e5e5e5"></div>
<div class="txt" style="left:181.49px;top:536.00px;font-size:12.90px;color:#6168b8;transform:scaleX(0.9753);">11/03/2025</div>
<div class="txt" style="left:355.88px;top:537.00px;font-size:12.90px;color:#383838;transform:scaleX(0.9134);">69.333.921</div>
<div class="txt" style="left:508.76px;top:537.00px;font-size:12.90px;color:#383838;transform:scaleX(0.9134);">18.908.723</div>
<div class="txt" style="left:661.76px;top:537.00px;font-size:12.90px;color:#383838;transform:scaleX(0.9134);">50.425.198</div>
<div class="txt" style="left:867.07px;top:537.00px;font-size:12.90px;color:#383838;transform:scaleX(0.9134);">0</div>
<div class="txt" style="left:967.76px;top:537.00px;font-size:12.90px;color:#383838;transform:scaleX(0.9134);">50.425.198</div>
<div class="a" style="left:154px;top:559.00px;width:882px;height:29.00px;background:#ffffff;border-bottom:1px solid #e5e5e5"></div>
<div class="txt" style="left:181.05px;top:566.00px;font-size:12.90px;color:#6168b8;transform:scaleX(0.9753);">12/03/2025</div>
<div class="txt" style="left:349.16px;top:567.00px;font-size:12.90px;color:#383838;transform:scaleX(0.9134);">338.205.140</div>
<div class="txt" style="left:525.14px;top:567.00px;font-size:12.90px;color:#383838;transform:scaleX(0.9134);">922.976</div>
<div class="txt" style="left:655.04px;top:567.00px;font-size:12.90px;color:#383838;transform:scaleX(0.9134);">337.282.164</div>
<div class="txt" style="left:833.73px;top:567.00px;font-size:12.90px;color:#383838;transform:scaleX(0.9134);">-50.000</div>
<div class="txt" style="left:961.04px;top:567.00px;font-size:12.90px;color:#383838;transform:scaleX(0.9134);">337.332.164</div>
<div class="a" style="left:154px;top:588.00px;width:882px;height:30.00px;background:#f5f5f5;border-bottom:1px solid #e5e5e5"></div>
<div class="txt" style="left:181.05px;top:596.00px;font-size:12.90px;color:#6168b8;transform:scaleX(0.9753);">13/03/2025</div>
<div class="txt" style="left:349.16px;top:597.00px;font-size:12.90px;color:#383838;transform:scaleX(0.9134);">144.086.715</div>
<div class="txt" style="left:508.76px;top:597.00px;font-size:12.90px;color:#383838;transform:scaleX(0.9134);">12.544.020</div>
<div class="txt" style="left:655.16px;top:597.00px;font-size:12.90px;color:#383838;transform:scaleX(0.9134);">131.542.695</div>
<div class="txt" style="left:817.35px;top:597.00px;font-size:12.90px;color:#383838;transform:scaleX(0.9134);">-1.375.000</div>
<div class="txt" style="left:961.16px;top:597.00px;font-size:12.90px;color:#383838;transform:scaleX(0.9134);">132.917.695</div>
<div class="a" style="left:154px;top:618.00px;width:882px;height:30.00px;background:#ffffff;border-bottom:1px solid #e5e5e5"></div>
<div class="txt" style="left:181.05px;top:625.00px;font-size:12.90px;color:#6168b8;transform:scaleX(0.9753);">14/03/2025</div>
<div class="txt" style="left:355.76px;top:626.00px;font-size:12.90px;color:#383838;transform:scaleX(0.9134);">60.870.555</div>
<div class="txt" style="left:515.12px;top:626.00px;font-size:12.90px;color:#383838;transform:scaleX(0.9134);">5.938.084</div>
<div class="txt" style="left:661.88px;top:626.00px;font-size:12.90px;color:#383838;transform:scaleX(0.9134);">54.932.471</div>
<div class="txt" style="left:817.35px;top:626.00px;font-size:12.90px;color:#383838;transform:scaleX(0.9134);">-2.245.000</div>
<div class="txt" style="left:967.88px;top:626.00px;font-size:12.90px;color:#383838;transform:scaleX(0.9134);">57.177.471</div>
<div class="a" style="left:154px;top:648.00px;width:882px;height:30.00px;background:#f5f5f5;border-bottom:1px solid #e5e5e5"></div>
<div class="txt" style="left:181.05px;top:655.00px;font-size:12.90px;color:#6168b8;transform:scaleX(0.9753);">15/03/2025</div>
<div class="txt" style="left:362.36px;top:656.00px;font-size:12.90px;color:#383838;transform:scaleX(0.9134);">2.794.701</div>
<div class="txt" style="left:525.25px;top:656.00px;font-size:12.90px;color:#383838;transform:scaleX(0.9134);">149.471</div>
<div class="txt" style="left:668.24px;top:656.00px;font-size:12.90px;color:#383838;transform:scaleX(0.9134);">2.645.230</div>
<div class="txt" style="left:867.07px;top:656.00px;font-size:12.90px;color:#383838;transform:scaleX(0.9134);">0</div>
<div class="txt" style="left:974.24px;top:656.00px;font-size:12.90px;color:#383838;transform:scaleX(0.9134);">2.645.230</div>
<div class="a" style="left:154px;top:678.00px;width:882px;height:29.00px;background:#ffffff;border-bottom:1px solid #e5e5e5"></div>
<div class="txt" style="left:181.05px;top:685.00px;font-size:12.90px;color:#6168b8;transform:scaleX(0.9753);">17/03/2025</div>
<div class="txt" style="left:355.76px;top:686.00px;font-size:12.90px;color:#383838;transform:scaleX(0.9134);">42.896.415</div>
<div class="txt" style="left:515.36px;top:686.00px;font-size:12.90px;color:#383838;transform:scaleX(0.9134);">4.100.277</div>
<div class="txt" style="left:661.76px;top:686.00px;font-size:12.90px;color:#383838;transform:scaleX(0.9134);">38.796.138</div>
<div class="txt" style="left:817.35px;top:686.00px;font-size:12.90px;color:#383838;transform:scaleX(0.9134);">-5.945.000</div>
<div class="txt" style="left:967.76px;top:686.00px;font-size:12.90px;color:#383838;transform:scaleX(0.9134);">44.741.138</div>
<div class="a" style="left:154px;top:707.00px;width:882px;height:30.00px;background:#f5f5f5;border-bottom:1px solid #e5e5e5"></div>
<div class="txt" style="left:181.05px;top:715.00px;font-size:12.90px;color:#6168b8;transform:scaleX(0.9753);">18/03/2025</div>
<div class="txt" style="left:349.16px;top:716.00px;font-size:12.90px;color:#383838;transform:scaleX(0.9134);">124.058.456</div>
<div class="txt" style="left:516.18px;top:716.00px;font-size:12.90px;color:#383838;transform:scaleX(0.9134);">3.011.603</div>
<div class="txt" style="left:655.16px;top:716.00px;font-size:12.90px;color:#383838;transform:scaleX(0.9134);">121.046.853</div>
<div class="txt" style="left:817.35px;top:716.00px;font-size:12.90px;color:#383838;transform:scaleX(0.9134);">-4.096.000</div>
<div class="txt" style="left:961.16px;top:716.00px;font-size:12.90px;color:#383838;transform:scaleX(0.9134);">125.142.853</div>
<div class="a" style="left:154px;top:737.00px;width:882px;height:30.00px;background:#ffffff;border-bottom:1px solid #e5e5e5"></div>
<div class="txt" style="left:181.05px;top:744.00px;font-size:12.90px;color:#6168b8;transform:scaleX(0.9753);">19/03/2025</div>
<div class="txt" style="left:349.28px;top:745.00px;font-size:12.90px;color:#383838;transform:scaleX(0.9134);">447.315.739</div>
<div class="txt" style="left:515.36px;top:745.00px;font-size:12.90px;color:#383838;transform:scaleX(0.9134);">5.249.001</div>
<div class="txt" style="left:655.16px;top:745.00px;font-size:12.90px;color:#383838;transform:scaleX(0.9134);">442.066.738</div>
<div class="txt" style="left:817.35px;top:745.00px;font-size:12.90px;color:#383838;transform:scaleX(0.9134);">-4.001.000</div>
<div class="txt" style="left:961.16px;top:745.00px;font-size:12.90px;color:#383838;transform:scaleX(0.9134);">446.067.738</div>
<div class="a" style="left:154px;top:767.00px;width:882px;height:30.00px;background:#f5f5f5;border-bottom:1px solid #e5e5e5"></div>
<div class="txt" style="left:181.23px;top:774.00px;font-size:12.90px;color:#6168b8;transform:scaleX(0.9753);">20/03/2025</div>
<div class="txt" style="left:362.24px;top:775.00px;font-size:12.90px;color:#383838;transform:scaleX(0.9134);">8.755.570</div>
<div class="txt" style="left:525.14px;top:775.00px;font-size:12.90px;color:#383838;transform:scaleX(0.9134);">665.375</div>
<div class="txt" style="left:668.24px;top:775.00px;font-size:12.90px;color:#383838;transform:scaleX(0.9134);">8.090.195</div>
<div class="txt" style="left:817.35px;top:775.00px;font-size:12.90px;color:#383838;transform:scaleX(0.9134);">-1.050.000</div>
<div class="txt" style="left:974.24px;top:775.00px;font-size:12.90px;color:#383838;transform:scaleX(0.9134);">9.140.195</div>
<div class="a" style="left:154px;top:797.00px;width:882px;height:29.00px;background:#ffffff;border-bottom:1px solid #e5e5e5"></div>
<div class="txt" style="left:181.23px;top:804.00px;font-size:12.90px;color:#6168b8;transform:scaleX(0.9753);">21/03/2025</div>
<div class="txt" style="left:355.88px;top:805.00px;font-size:12.90px;color:#383838;transform:scaleX(0.9134);">35.002.161</div>
<div class="txt" style="left:515.12px;top:805.00px;font-size:12.90px;color:#383838;transform:scaleX(0.9134);">7.374.754</div>
<div class="txt" style="left:661.88px;top:805.00px;font-size:12.90px;color:#383838;transform:scaleX(0.9134);">27.627.407</div>
<div class="txt" style="left:827.13px;top:805.00px;font-size:12.90px;color:#383838;transform:scaleX(0.9134);">-350.000</div>
<div class="txt" style="left:967.88px;top:805.00px;font-size:12.90px;color:#383838;transform:scaleX(0.9134);">27.977.407</div>
<div class="a" style="left:271px;top:260px;width:1px;height:555px;background:#e3e3e3"></div>
<div class="a" style="left:424px;top:260px;width:1px;height:555px;background:#e3e3e3"></div>
<div class="a" style="left:577px;top:260px;width:1px;height:555px;background:#e3e3e3"></div>
<div class="a" style="left:730px;top:260px;width:1px;height:555px;background:#e3e3e3"></div>
<div class="a" style="left:883px;top:260px;width:1px;height:555px;background:#e3e3e3"></div>
<div class="a" style="left:153px;top:260px;width:2px;height:554px;background:#dfe0e3"></div>
<div class="a" style="left:146px;top:49px;width:1px;height:864px;background:#eef0fa"></div>
<div class="a" style="left:1036px;top:260px;width:135px;height:555px;background:#fff"></div>
<div class="a" style="left:1171px;top:260px;width:19px;height:555px;background:#f1f1f1"></div>
<div class="a" style="left:1173px;top:277px;width:13px;height:438.5px;background:#c1c1c1"></div>
<svg class="a" style="left:1175.5px;top:266.5px" width="8" height="5"><path d="M0 4.5h8L4 0z" fill="#a3a3a3"/></svg>
<svg class="a" style="left:1175.5px;top:802px" width="8" height="5"><path d="M0 0h8L4 4.5z" fill="#505050"/></svg>
<div class="a" style="left:154px;top:814px;width:1017px;height:17.5px;background:#f1f1f1"></div>
<div class="a" style="left:172px;top:816px;width:966px;height:13px;background:#c1c1c1"></div>
<svg class="a" style="left:161px;top:818.5px" width="5" height="8"><path d="M4.5 0v8L0 4z" fill="#a3a3a3"/></svg>
<svg class="a" style="left:1160.5px;top:818.5px" width="5" height="8"><path d="M0 0v8L4.5 4z" fill="#505050"/></svg>
<div class="a" style="left:1171px;top:814px;width:18.5px;height:18px;background:#e2e2e2"></div>
<div class="a" style="left:153px;top:832px;width:883px;height:30px;background:#e3e3e3"></div>
<div class="a" style="left:270px;top:832px;width:1px;height:30px;background:#d0d0d0"></div>
<div class="a" style="left:423px;top:832px;width:1px;height:30px;background:#d0d0d0"></div>
<div class="a" style="left:576px;top:832px;width:1px;height:30px;background:#d0d0d0"></div>
<div class="a" style="left:729px;top:832px;width:1px;height:30px;background:#d0d0d0"></div>
<div class="a" style="left:882px;top:832px;width:1px;height:30px;background:#d0d0d0"></div>
<div class="a" style="left:1036px;top:832px;width:153.5px;height:30px;background:#fff;border:1px solid #e2e2e2;border-left:none"></div>
<div class="txt" style="left:336.27px;top:841.00px;font-size:12.90px;font-weight:bold;-webkit-text-stroke:0.12px currentColor;color:#1c1c1c;transform:scaleX(0.9462);">1.858.066.599</div>
<div class="txt" style="left:499.40px;top:841.00px;font-size:12.90px;font-weight:bold;-webkit-text-stroke:0.12px currentColor;color:#1c1c1c;transform:scaleX(0.9462);">101.357.451</div>
<div class="txt" style="left:642.15px;top:841.00px;font-size:12.90px;font-weight:bold;-webkit-text-stroke:0.12px currentColor;color:#1c1c1c;transform:scaleX(0.9462);">1.756.709.148</div>
<div class="txt" style="left:812.23px;top:841.00px;font-size:12.90px;font-weight:bold;-webkit-text-stroke:0.12px currentColor;color:#1c1c1c;transform:scaleX(0.9462);">17.352.143</div>
<div class="txt" style="left:948.15px;top:841.00px;font-size:12.90px;font-weight:bold;-webkit-text-stroke:0.12px currentColor;color:#1c1c1c;transform:scaleX(0.9462);">1.739.357.005</div>
<div class="a" style="left:882px;top:170px;width:158px;height:650px;border:3px solid #df4643;box-shadow:2px 3px 6px rgba(0,0,0,0.28), inset 0 5px 6px -2px rgba(0,0,0,0.2), inset 3px 0 5px -3px rgba(0,0,0,0.12)"></div>
<div class="a" style="left:163.5px;top:873px;width:21.3px;height:21.5px;border:1px solid #c5c8de;border-radius:3px;background:#fff"></div>
<svg class="a" style="left:163.5px;top:873px" width="21.3" height="21.5" viewBox="0 0 21.5 21.5"><path d="M9.5 7.5L6.5 10.75 9.5 14M13.5 7.5L10.5 10.75 13.5 14" stroke="#9094c4" stroke-width="1.1" fill="none"/></svg>
<div class="a" style="left:187.2px;top:873px;width:21.5px;height:21.5px;border:1px solid #c5c8de;border-radius:3px;background:#fff"></div>
<svg class="a" style="left:187.2px;top:873px" width="21.5" height="21.5" viewBox="0 0 21.5 21.5"><path d="M12 7L8.5 10.75 12 14.5" stroke="#9094c4" stroke-width="1.1" fill="none"/></svg>
<div class="txt" style="left:215.07px;top:877.00px;font-size:13.04px;color:#333;transform:scaleX(0.8837);">Trang</div>
<div class="inp" style="left:249.3px;top:872px;width:44.2px;height:23px"></div>
<div class="txt" style="left:268.91px;top:877.00px;font-size:13.04px;color:#333;transform:scaleX(0.8558);">1</div>
<div class="txt" style="left:299.77px;top:877.00px;font-size:13.04px;color:#333;transform:scaleX(0.8898);">trên 1</div>
<div class="a" style="left:335.5px;top:873px;width:21px;height:21.5px;border:1px solid #c5c8de;border-radius:3px;background:#fff"></div>
<svg class="a" style="left:335.5px;top:873px" width="21" height="21.5" viewBox="0 0 21.5 21.5"><path d="M9.5 7L13 10.75 9.5 14.5" stroke="#9094c4" stroke-width="1.1" fill="none"/></svg>
<div class="a" style="left:359.2px;top:873px;width:21px;height:21.5px;border:1px solid #c5c8de;border-radius:3px;background:#fff"></div>
<svg class="a" style="left:359.2px;top:873px" width="21" height="21.5" viewBox="0 0 21.5 21.5"><path d="M8 7.5L11 10.75 8 14M12 7.5L15 10.75 12 14" stroke="#9094c4" stroke-width="1.1" fill="none"/></svg>
<div class="a" style="left:384.4px;top:873px;width:20.8px;height:21.5px;border:1.1px solid #4a4e86;border-radius:3px;background:#fff"></div>
<svg class="a" style="left:388.8px;top:877px" width="12" height="14" viewBox="0 0 12 14"><g stroke="#2c3077" stroke-width="1.25" fill="none"><path d="M6.2 2.2A4 4.8 0 0 0 3.3 10.3"/><path d="M5.8 11.8A4 4.8 0 0 0 8.7 3.7"/></g><path d="M5.6 0.4L8.2 2.2 5.6 4z M6.4 10L3.8 11.8 6.4 13.6z" fill="#2c3077"/></svg>
<div class="inp" style="left:410.6px;top:872.4px;width:39.4px;height:23.2px"></div>
<div class="txt" style="left:415.01px;top:877.00px;font-size:13.04px;color:#333;transform:scaleX(0.9453);">50</div>
<svg class="a" style="left:437.5px;top:881.3px" width="9" height="6" viewBox="0 0 9 6"><path d="M1.2 1.2 L4.5 4.3 L7.8 1.2" stroke="#333" stroke-width="1.4" fill="none"/></svg>
<div class="txt" style="left:1024.88px;top:877.00px;font-size:13.33px;color:#444;transform:scaleX(0.8669);">Hiển thị 1 - 22 trên 22 kết quả</div>
</body></html>
